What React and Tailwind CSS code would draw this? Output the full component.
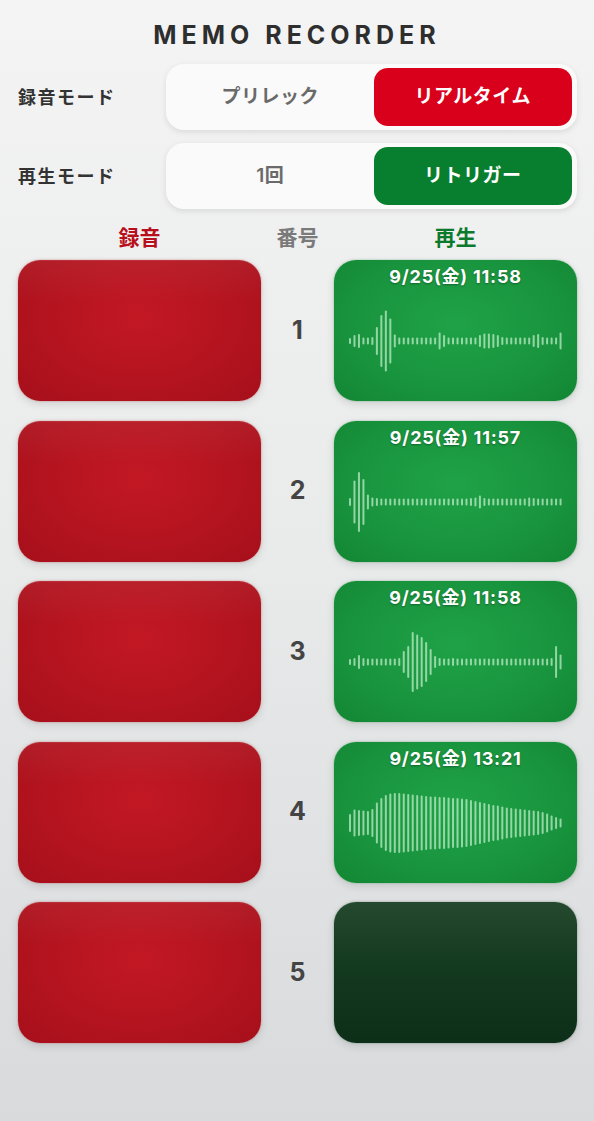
import React from 'react';

// waveform bar heights (px), 48 bars per clip
const WAVES = {
  1: [6,12,14,7,7,8,28,52,61,45,13,7,7,7,7,7,7,7,7,7,17,12,7,7,7,7,7,7,7,12,15,15,14,12,8,7,7,7,7,7,7,12,14,8,7,7,7,17],
  2: [8,43,60,46,15,9,8,7,7,7,7,7,7,7,7,7,7,7,7,7,7,7,7,7,7,7,7,8,9,13,8,7,7,7,7,7,7,7,7,7,9,8,7,7,7,7,7,7],
  3: [6,8,14,8,7,7,7,7,7,7,7,8,22,32,60,55,50,40,26,12,8,7,7,8,7,7,7,7,7,7,7,7,7,7,7,7,7,7,7,7,7,7,7,7,7,8,32,15],
  4: [18,27,26,25,24,28,41,50,56,59,60,60,59,58,57,56,55,54,53,53,52,52,51,50,50,49,48,46,44,42,40,38,36,35,33,31,30,29,28,27,26,25,24,22,19,15,12,9],
};

const ROWS = [
  { n: 1, date: '9/25(金) 11:58' },
  { n: 2, date: '9/25(金) 11:57' },
  { n: 3, date: '9/25(金) 11:58' },
  { n: 4, date: '9/25(金) 13:21' },
  { n: 5, date: null },
];

function Waveform({ bars }) {
  const pitch = 4.48;
  return (
    <svg width="213" height="64" viewBox="0 0 213 64" className="block">
      {bars.map((h, i) => (
        <rect
          key={i}
          x={i * pitch}
          y={32 - h / 2}
          width="2"
          height={h}
          rx="1"
          fill="rgba(205,245,212,0.68)"
        />
      ))}
    </svg>
  );
}

function Segmented({ left, right, activeClass }) {
  return (
    <div className="flex-1 h-[66px] rounded-[18px] bg-[#fafafa] shadow-[0_2px_6px_rgba(0,0,0,0.10)] px-[5px] py-[4px] grid grid-cols-2 gap-[4px]">
      <div className="flex items-center justify-center text-[19px] font-semibold tracking-[0.5px] text-[#6a6a6a]">{left}</div>
      <div className={`flex items-center justify-center rounded-[14px] text-[19px] font-bold tracking-[0.5px] text-white ${activeClass}`}>{right}</div>
    </div>
  );
}

export default function App() {
  return (
    <div className="min-h-[1121px] w-full bg-[linear-gradient(to_bottom,#f4f4f4,#e9eaea_50%,#d8dadc)] font-['Inter','Noto_Sans_CJK_JP',sans-serif]">
      {/* ── Title ───────────────────────────── */}
      <h1 className="pt-[21px] h-[49px] leading-[28px] text-center text-[25px] font-bold tracking-[5px] text-[#2e2e2e]">
        MEMO RECORDER
      </h1>

      {/* ── Mode selectors ──────────────────── */}
      <div className="mt-[15px] pl-[18px] pr-[17px] flex flex-col gap-[13px]">
        <div className="flex items-center">
          <span className="w-[148px] text-[18px] font-bold tracking-[1.5px] text-[#333]">録音モード</span>
          <Segmented left="プリレック" right="リアルタイム" activeClass="bg-[#d9001b]" />
        </div>
        <div className="flex items-center">
          <span className="w-[148px] text-[18px] font-bold tracking-[1.5px] text-[#333]">再生モード</span>
          <Segmented left="1回" right="リトリガー" activeClass="bg-[#087f2e]" />
        </div>
      </div>

      {/* ── Column headers ──────────────────── */}
      <div className="mt-[17px] pl-[18px] pr-[17px] grid grid-cols-[243px_73px_243px] h-[24px] leading-[24px] text-[21px] font-bold text-center">
        <span className="text-[#b80f1c]">録音</span>
        <span className="text-[#7a7a7a]">番号</span>
        <span className="text-[#0c7a2c]">再生</span>
      </div>

      {/* ── Slots ───────────────────────────── */}
      <div className="mt-[10px] pl-[18px] pr-[17px] flex flex-col gap-[19.5px]">
        {ROWS.map((r) => (
          <div key={r.n} className="grid grid-cols-[243px_73px_243px] h-[141px]">
            <button className="rounded-[22px] bg-[linear-gradient(to_bottom,rgba(255,255,255,0.05),rgba(255,255,255,0)_30%),radial-gradient(ellipse_at_50%_40%,#c21824_0%,#b4141f_55%,#a50f1a_100%)] shadow-[0_0_2px_rgba(200,20,30,0.45),0_3px_8px_rgba(0,0,0,0.12),inset_0_1px_0_rgba(255,255,255,0.08)]" />
            <div className="flex items-center justify-center text-[25px] font-bold text-[#444]">{r.n}</div>
            {r.date ? (
              <button className="rounded-[22px] bg-[radial-gradient(ellipse_at_50%_45%,#1fa247_0%,#19943e_60%,#138633_100%)] shadow-[0_0_2px_rgba(20,140,50,0.45),0_3px_8px_rgba(0,0,0,0.12)] flex flex-col items-center pt-[6px]">
                <span className="h-[22px] leading-[22px] text-[18px] font-bold tracking-[0.8px] text-white [text-shadow:0_1px_2px_rgba(0,0,0,0.35)]">{r.date}</span>
                <div className="mt-[21px]">
                  <Waveform bars={WAVES[r.n]} />
                </div>
              </button>
            ) : (
              <button className="rounded-[22px] bg-[linear-gradient(to_bottom,#25492f,#13391f_45%,#0d2f19)] shadow-[0_0_2px_rgba(20,80,40,0.45),0_3px_8px_rgba(0,0,0,0.12)]" />
            )}
          </div>
        ))}
      </div>
    </div>
  );
}
